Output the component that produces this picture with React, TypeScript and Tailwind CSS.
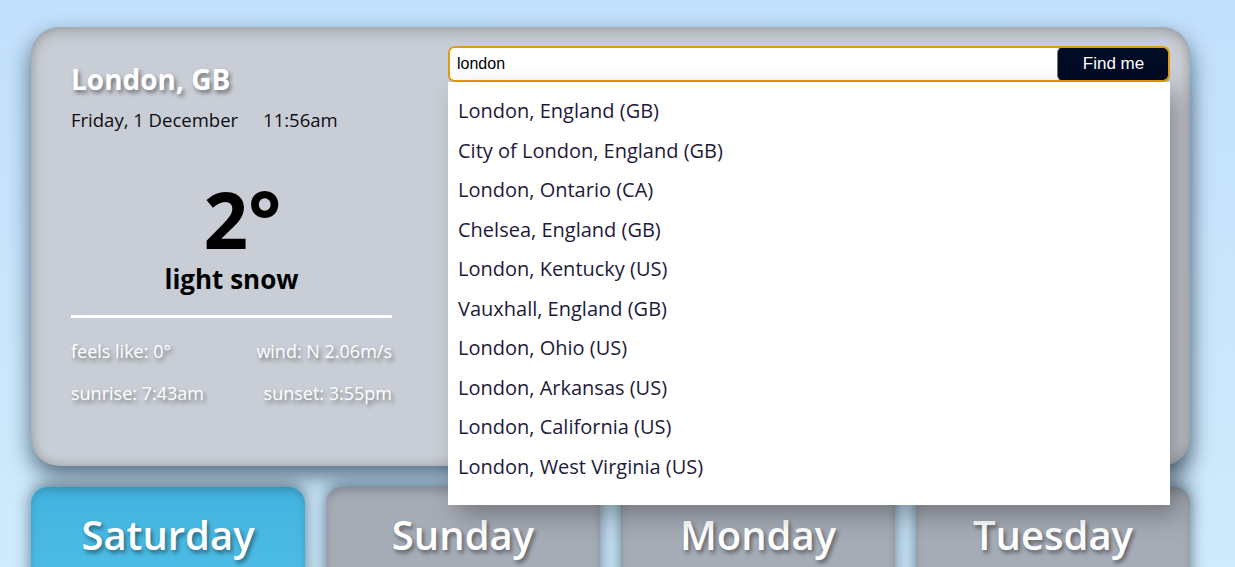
const suggestions = [
  "London, England (GB)",
  "City of London, England (GB)",
  "London, Ontario (CA)",
  "Chelsea, England (GB)",
  "London, Kentucky (US)",
  "Vauxhall, England (GB)",
  "London, Ohio (US)",
  "London, Arkansas (US)",
  "London, California (US)",
  "London, West Virginia (US)",
];

const days = [
  { name: "Saturday", active: true },
  { name: "Sunday", active: false },
  { name: "Monday", active: false },
  { name: "Tuesday", active: false },
];

const shadowText = "[text-shadow:2px_3px_4px_rgba(0,0,0,0.45)]";

function CurrentWeather() {
  return (
    <div className="w-[321px] shrink-0 ml-[40px] pt-[33px] flex flex-col">
      <h1 className={`text-[28px] leading-[38px] font-bold text-white ${shadowText}`}>London, GB</h1>
      <div className="flex gap-[25px] mt-[10px] text-[18.5px] leading-[24px] font-medium text-[#0d0d12]">
        <span>Friday, 1 December</span>
        <span>11:56am</span>
      </div>
      <div className="flex flex-col items-center mt-[52px]">
        <div className="text-[78px] leading-[70px] font-bold text-black pl-[22px]">2°</div>
        <div className="text-[26px] leading-[30px] font-bold text-black mt-[10px]">light snow</div>
      </div>
      <div className="h-[3px] bg-white mt-[21px]" />
      <div className={`grid grid-cols-2 gap-y-[16px] mt-[20px] text-[18px] leading-[26px] text-white ${shadowText}`}>
        <span>feels like: 0°</span>
        <span className="text-right">wind: N 2.06m/s</span>
        <span>sunrise: 7:43am</span>
        <span className="text-right">sunset: 3:55pm</span>
      </div>
    </div>
  );
}

function Search() {
  return (
    <div className="relative flex-1 mt-[19px] mr-[20px] ml-[56px] self-start">
      <div className="flex h-[36px] rounded-[7px] border-2 border-[#e49b0f] bg-white overflow-hidden">
        <input
          defaultValue="london"
          className="flex-1 px-[7px] text-[16px] text-black outline-none bg-white font-['Liberation_Sans',Arial,sans-serif]"
        />
        <button
          type="button"
          className="w-[113px] -my-[2px] -mr-[2px] rounded-[7px] border border-[#777] bg-[#020b24] text-white text-[17px] font-['Liberation_Sans',Arial,sans-serif]"
        >
          Find me
        </button>
      </div>
      <ul className="absolute left-0 right-0 top-[36px] h-[423px] bg-white pt-[9px] shadow-[10px_10px_24px_rgba(0,0,0,0.3)]">
        {suggestions.map((s) => (
          <li key={s} className="h-[39.5px] leading-[40px] px-[10px] text-[20px] text-[#1e1a3a]">
            {s}
          </li>
        ))}
      </ul>
    </div>
  );
}

export default function App() {
  return (
    <div className="min-h-screen bg-gradient-to-b from-[#c2e0fc] to-[#d1edfc] pt-[27px] pb-[40px] font-['Open_Sans',sans-serif]">
      <div className="ml-[31px] w-[1159px]">
        <section className="relative z-10 flex h-[439px] rounded-[28px] bg-[#c9ced6] shadow-[0_10px_22px_rgba(20,40,60,0.65),inset_0_4px_14px_rgba(0,0,0,0.22),inset_0_-2px_10px_rgba(0,0,0,0.1)]">
          <CurrentWeather />
          <Search />
        </section>
        <div className="grid grid-cols-4 gap-[21px] mt-[21px]">
          {days.map((d) => (
            <div
              key={d.name}
              className={`h-[150px] rounded-[16px] flex justify-center pt-[21px] shadow-[0_-2px_16px_rgba(20,40,60,0.6),inset_0_3px_10px_rgba(0,0,0,0.15)] ${
                d.active ? "bg-gradient-to-b from-[#43b4e0] to-[#52c2ea]" : "bg-[#a6acb6]"
              }`}
            >
              <span className={`text-[40px] leading-[54px] font-semibold text-white ${shadowText}`}>{d.name}</span>
            </div>
          ))}
        </div>
      </div>
    </div>
  );
}
